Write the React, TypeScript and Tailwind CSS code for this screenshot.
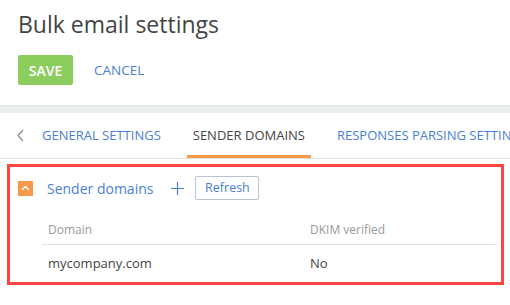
import React, { ReactElement } from "react";

function ChevronUpBox(): ReactElement {
  return (
    <span className="flex h-[15px] w-[15px] shrink-0 items-center justify-center bg-[#f5994b]">
      <svg width="9" height="6" viewBox="0 0 9 6" fill="none">
        <path d="M1 5 L4.5 1.5 L8 5" stroke="#fff" strokeWidth="1.3" />
      </svg>
    </span>
  );
}

function App(): ReactElement {
  return (
    <div className="h-[305px] w-[510px] overflow-hidden bg-white font-['Open_Sans',sans-serif]">
      <div className="px-[18px] pt-[8px]">
        <h1 className="text-[23px] leading-[32px] font-normal text-[#444]">
          Bulk email settings
        </h1>
        <div className="mt-[15px] flex items-center">
          <button className="h-[30px] w-[55px] rounded-[2px] bg-[#8ccd5e] text-[14px] font-semibold text-white">
            SAVE
          </button>
          <button className="ml-[21px] text-[13.5px] text-[#4a7fd6]">CANCEL</button>
        </div>
      </div>

      <div className="mt-[20px] h-[8px] border-t border-[#e0e4e4] bg-[#eaeeee]" />

      <div className="flex h-[46px] items-stretch overflow-hidden whitespace-nowrap border-b border-[#e0e0e0]">
        <div className="flex w-[42px] shrink-0 items-center pl-[17px]">
          <svg width="7" height="13" viewBox="0 0 7 13" fill="none">
            <path d="M6 1 L1 6.5 L6 12" stroke="#888" strokeWidth="1.2" />
          </svg>
        </div>
        <div className="flex shrink-0 items-center text-[13px] text-[#4a7fd6]">GENERAL SETTINGS</div>
        <div className="ml-[26px] flex shrink-0 items-center border-b-[3px] border-[#f5994b] px-[6px] pt-[3px] text-[13px] text-[#444]">
          SENDER DOMAINS
        </div>
        <div className="ml-[26px] flex shrink-0 items-center text-[13px] text-[#4a7fd6]">
          RESPONSES PARSING SETTINGS
        </div>
      </div>

      <div className="mt-[5px] ml-[7px] h-[121px] w-[497px] border-[3px] border-[#ff4444]">
        <div className="flex items-center pt-[9px] pl-[8px]">
          <ChevronUpBox />
          <span className="ml-[14px] text-[14px] text-[#4a7fd6]">Sender domains</span>
          <svg className="ml-[18px]" width="13" height="13" viewBox="0 0 13 13" fill="none">
            <path d="M6.5 0 V13 M0 6.5 H13" stroke="#4a7fd6" strokeWidth="1.2" />
          </svg>
          <button className="ml-[11px] h-[24px] w-[64px] rounded-[2px] border border-[#b8c4d0] text-[12.5px] text-[#4a7fd6]">
            Refresh
          </button>
        </div>
        <div className="mt-[16px] ml-[32px] mr-[4px]">
          <div className="flex h-[29px] items-center border-b border-[#e0e0e0] pl-[6px] text-[12px] text-[#999]">
            <span className="w-[262px]">Domain</span>
            <span>DKIM verified</span>
          </div>
          <div className="flex h-[38px] items-center pl-[6px] text-[13px] text-[#444]">
            <span className="w-[262px]">mycompany.com</span>
            <span>No</span>
          </div>
        </div>
      </div>
    </div>
  );
}

export default App;
